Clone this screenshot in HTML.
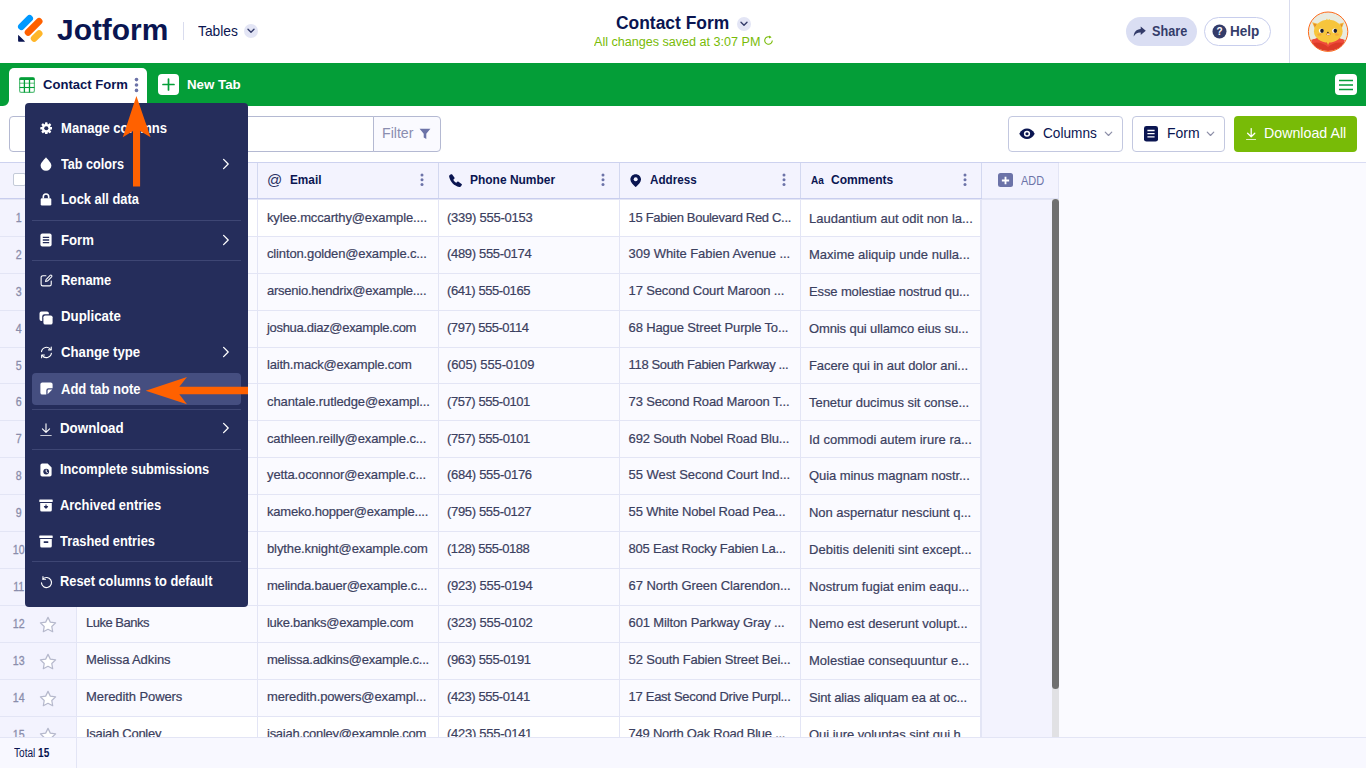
<!DOCTYPE html>
<html lang="en">
<head>
<meta charset="utf-8">
<title>Contact Form - Jotform Tables</title>
<style>
*{box-sizing:border-box;margin:0;padding:0}
html,body{width:1366px;height:768px;overflow:hidden;background:#fff}
body{font-family:"Liberation Sans",sans-serif;color:#0a1551;position:relative}
.abs{position:absolute}
/* header */
#hdr{position:absolute;left:0;top:0;width:1366px;height:63px;background:#fff}
#logo-txt{position:absolute;left:56px;top:12px;font-size:29.5px;font-weight:700;color:#0a1551;line-height:36px}
#sep1{position:absolute;left:183px;top:22px;width:1px;height:18px;background:#d9dcee}
#tables{position:absolute;left:198px;top:22px;font-size:14.5px;line-height:18px;color:#0a1551}
.chev-c{position:absolute;width:14px;height:14px;border-radius:50%;background:#e3e5f5}
#title{position:absolute;left:615px;top:11px;font-size:18px;font-weight:700;line-height:22px;color:#0a1551;white-space:nowrap}
#saved{position:absolute;left:593px;top:34px;font-size:12.5px;line-height:15px;color:#78bb07;white-space:nowrap}
#share{position:absolute;left:1126px;top:17px;width:71px;height:29px;border-radius:15px;background:#dadef3}
#help{position:absolute;left:1204px;top:17px;width:67px;height:29px;border-radius:15px;background:#fff;border:1px solid #c8ceed}
.pill-t{position:absolute;top:6px;font-size:14px;font-weight:700;line-height:17px;color:#343c6a}
#vsep{position:absolute;left:1289px;top:0;width:1px;height:63px;background:#d9dcee}
/* tab bar */
#bar{position:absolute;left:0;top:63px;width:1366px;height:43px;background:#049e38}
#tab{position:absolute;left:9px;top:5px;width:138px;height:38px;background:#fff;border-radius:5px 5px 0 0}
#tab-t{position:absolute;left:33px;top:8px;font-size:13.5px;font-weight:700;line-height:16px;color:#0a1551;white-space:nowrap}
#newtab-t{position:absolute;left:186px;top:13px;font-size:13.5px;font-weight:700;line-height:16px;color:#fff;white-space:nowrap}
/* toolbar */
#search{position:absolute;left:9px;top:116px;width:365px;height:36px;border:1px solid #b4b9d2;border-radius:4px 0 0 4px;background:#fff}
#filter{position:absolute;left:373px;top:116px;width:68px;height:36px;border:1px solid #b4b9d2;border-radius:0 4px 4px 0;background:#fafaff}
#filter span{position:absolute;left:9px;top:8px;font-size:14.5px;line-height:17px;color:#8a8db0}
.tbtn{position:absolute;top:116px;height:36px;border:1px solid #c3c8e0;border-radius:4px;background:#fff}
.tbtn span{position:absolute;top:8px;font-size:14.5px;line-height:17px;color:#0a1551;white-space:nowrap}
#dl{position:absolute;left:1234px;top:116px;width:123px;height:36px;border-radius:4px;background:#78bb07}
#dl span{position:absolute;left:31px;top:8px;font-size:14.5px;line-height:17px;color:#fff;white-space:nowrap}
/* table */
#tbl{position:absolute;left:0;top:160px;width:1366px;height:578px;background:linear-gradient(#fff 0,#fff 2px,#d9dcf3 2px,#d9dcf3 3px,#fafaff 3px);overflow:hidden}
#tbl:before{content:"";position:absolute;left:0;top:3px;width:1059px;height:575px;background:#f3f3fe}
#th{position:absolute;left:0;top:2px;width:1059px;height:37px;background:#f3f3fe;border-top:1px solid #cdd2ef;border-bottom:1px solid #dfe2f5;box-shadow:0 1px 0 #e3e5f5}
.hc{position:absolute;top:0;height:35px;border-right:1px solid #d3d8f0;box-shadow:0 1px 0 #c8cdee}
.hc.add{border-right:1px solid #e3e5f5;box-shadow:none}
.cb{position:absolute;left:13px;top:10px;width:13px;height:13px;border:1px solid #c3cad8;border-radius:2px;background:#fff}
.hi{position:absolute}
.at{font-size:15px;line-height:18px;color:#2a3163}
.aa{font-size:10px;line-height:12px;color:#0a1551;font-weight:700}
.ht{position:absolute;left:31px;top:9px;font-size:13px;font-weight:700;line-height:16px;color:#0a1551;white-space:nowrap}
.kb{position:absolute;left:161.9px;top:9.6px}
.plus{position:absolute;left:16.3px;top:9.8px;width:15px;height:14.6px;border-radius:2.5px;background:#6c73a8}
.plus svg{position:absolute;left:0;top:0}
.addt{position:absolute;left:38px;top:11px;font-size:12px;line-height:14px;color:#6c73a8}
.row{position:absolute;left:0;width:982px;background:#fafaff}
.row.w{background:#fff}
.c{position:absolute;top:0;height:100%;width:181px;border-right:1px solid #e3e5f5;border-bottom:1px solid #e3e5f5;overflow:hidden;white-space:nowrap}
.c span{position:absolute;left:9px;top:calc(10px + var(--o));font-size:13px;line-height:16px;color:#3b4060;white-space:nowrap;-webkit-text-stroke:.2px #3b4060}
.c3 span{left:8px}
.c4 span{left:8.6px}
.c5{width:181px;border-right:2px solid #e3e5f5}
.c5 span{left:8px;top:calc(11px + var(--o))}
.c0{left:0;width:77px;background:#f3f3fe}
.c0 .n{left:0;width:44px;top:10px;text-align:center;color:#8a8dab;font-size:12.5px;transform:scaleX(.85);transform-origin:0 0;-webkit-text-stroke:.3px #8a8dab}
.star{position:absolute;left:38.8px;top:9.8px}
#sbtrack{position:absolute;left:1052px;top:39px;width:7px;height:539px;background:#e1e1e4}
#sbthumb{position:absolute;left:1052px;top:39px;width:7px;height:490px;background:#707070;border-radius:3.5px}
#foot{position:absolute;left:0;top:737px;width:1366px;height:31px;background:#f8f8ff;border-top:1px solid #e3e5f5}
#ftot{position:absolute;left:13px;top:8px;font-size:12px;line-height:13px;color:#0a1551}
#fsep{position:absolute;left:76px;top:0;width:1px;height:30px;background:#e3e5f5}
/* menu */
#menu{position:absolute;left:25px;top:103px;width:223px;height:504px;background:#252d5b;border-radius:4px}
.mi{position:absolute}
.mt{position:absolute;left:36px;font-size:14px;font-weight:700;line-height:18px;color:#fff;white-space:nowrap}
.md{position:absolute;left:7px;width:209px;height:1px;background:#3e4674}
.mhl{position:absolute;left:7px;width:209px;height:32px;border-radius:4px;background:#454e80}
#arrows{position:absolute;left:0;top:0;pointer-events:none}
/*FIT*/
#logo-txt{margin-left:1.44px;margin-top:0px;transform:scaleX(1.0135);transform-origin:0 0}
#tables{margin-left:0.00px;margin-top:0px;transform:scaleX(0.9524);transform-origin:0 0}
#title{margin-left:1.44px;margin-top:1px;transform:scaleX(0.9673);transform-origin:0 0}
#saved{margin-left:0.54px;margin-top:1px;transform:scaleX(1.0061);transform-origin:0 0}
#sh-t{margin-left:0.54px;margin-top:0px;transform:scaleX(0.9039);transform-origin:0 0}
#hp-t{margin-left:-0.54px;margin-top:0px;transform:scaleX(0.9655);transform-origin:0 0}
#tab-t{margin-left:0.54px;margin-top:1px;transform:scaleX(0.9680);transform-origin:0 0}
#newtab-t{margin-left:0.72px;margin-top:1px;transform:scaleX(0.9859);transform-origin:0 0}
#flt-t{margin-left:-0.72px;margin-top:0px;transform:scaleX(0.9755);transform-origin:0 0}
#col-t{margin-left:0.36px;margin-top:0px;transform:scaleX(0.9409);transform-origin:0 0}
#frm-t{margin-left:-0.90px;margin-top:0px;transform:scaleX(0.9637);transform-origin:0 0}
#dl-t{margin-left:-1.08px;margin-top:1px;transform:scaleX(0.9806);transform-origin:0 0}
#h-email{margin-left:0.54px;margin-top:0px;transform:scaleX(0.9070);transform-origin:0 0}
#h-phone{margin-left:0.18px;margin-top:0px;transform:scaleX(0.9207);transform-origin:0 0}
#h-addr{margin-left:-0.54px;margin-top:0px;transform:scaleX(0.8966);transform-origin:0 0}
#h-comm{margin-left:-0.54px;margin-top:0px;transform:scaleX(0.9258);transform-origin:0 0}
#add-t{margin-left:0.72px;margin-top:0px;transform:scaleX(0.9141);transform-origin:0 0}
#ftot{margin-left:0.54px;margin-top:1px;transform:scaleX(0.8405);transform-origin:0 0}
#m0{margin-left:-0.18px;margin-top:0px;transform:scaleX(0.9337);transform-origin:0 0}
#m1{margin-left:-0.14px;margin-top:0px;transform:scaleX(0.9023);transform-origin:0 0}
#m2{margin-left:-0.18px;margin-top:0px;transform:scaleX(0.9184);transform-origin:0 0}
#m3{margin-left:-0.18px;margin-top:0px;transform:scaleX(0.9378);transform-origin:0 0}
#m4{margin-left:-0.18px;margin-top:0px;transform:scaleX(0.9224);transform-origin:0 0}
#m5{margin-left:-0.18px;margin-top:0px;transform:scaleX(0.9490);transform-origin:0 0}
#m6{margin-left:-0.18px;margin-top:0px;transform:scaleX(0.9422);transform-origin:0 0}
#m7{margin-left:-0.18px;margin-top:0px;transform:scaleX(0.9302);transform-origin:0 0}
#m8{margin-left:-0.72px;margin-top:0px;transform:scaleX(0.9519);transform-origin:0 0}
#m9{margin-left:-0.72px;margin-top:0px;transform:scaleX(0.9134);transform-origin:0 0}
#m10{margin-left:-0.72px;margin-top:0px;transform:scaleX(0.9225);transform-origin:0 0}
#m11{margin-left:-0.72px;margin-top:0px;transform:scaleX(0.9172);transform-origin:0 0}
#m12{margin-left:-0.72px;margin-top:0px;transform:scaleX(0.9157);transform-origin:0 0}
/*ENDFIT*/
</style>
</head>
<body>
<!-- HEADER -->
<div id="hdr">
  <svg class="abs" style="left:17px;top:14px" width="28" height="30" viewBox="0 0 28 30">
    <path d="M1.1 21.6 Q1.1 20.6 1.9 21.4 L7.6 27 Q8.4 27.8 7.4 27.8 L1.9 27.8 Q1.1 27.8 1.1 27 Z" fill="#0a1551"/>
    <g fill="none" stroke-linecap="round" stroke-width="6.8">
    <path d="M4.4 12.7 L12.6 4.4" stroke="#0099ff"/>
    <path d="M11.1 18.4 L22.1 7.3" stroke="#ff6100"/>
    <path d="M17.2 24.4 L22.1 19.6" stroke="#ffb629"/>
    </g>
  </svg>
  <div id="logo-txt">Jotform</div>
  <div id="sep1"></div>
  <div id="tables">Tables</div>
  <div class="chev-c" style="left:244px;top:24px"><svg class="abs" style="left:3px;top:4px" width="8" height="6" viewBox="0 0 8 6"><path d="M1 1.2 L4 4.2 L7 1.2" fill="none" stroke="#343c6a" stroke-width="1.4" stroke-linecap="round" stroke-linejoin="round"/></svg></div>
  <div id="title">Contact Form</div>
  <div class="chev-c" style="left:736.7px;top:16.7px"><svg class="abs" style="left:3px;top:4px" width="8" height="6" viewBox="0 0 8 6"><path d="M1 1.2 L4 4.2 L7 1.2" fill="none" stroke="#343c6a" stroke-width="1.4" stroke-linecap="round" stroke-linejoin="round"/></svg></div>
  <div id="saved">All changes saved at 3:07 PM</div>
  <svg class="abs" style="left:763px;top:35px" width="11" height="11" viewBox="0 0 11 11"><path d="M9.3 5.5 A3.8 3.8 0 1 1 7.2 2.1" fill="none" stroke="#78bb07" stroke-width="1.1"/><path d="M6.2 0.6 L8.6 2.3 L6.0 3.6 Z" fill="#78bb07"/></svg>
  <div id="share">
    <svg class="abs" style="left:7.4px;top:8.6px" width="13.5" height="11.4" viewBox="0 0 15 13"><path d="M8.6 0.6 L14.4 5.4 L8.6 10.2 L8.6 7.3 C5 7.1 2.4 8.6 0.6 12 C0.8 7 3.6 3.9 8.6 3.5 Z" fill="#343c6a"/></svg>
    <div class="pill-t" id="sh-t" style="left:25px">Share</div>
  </div>
  <div id="help">
    <svg class="abs" style="left:7px;top:6px" width="15" height="15" viewBox="0 0 15 15"><circle cx="7.5" cy="7.5" r="7" fill="#343c6a"/><text x="7.5" y="11" font-family="Liberation Sans, sans-serif" font-size="10" font-weight="700" fill="#fff" text-anchor="middle">?</text></svg>
    <div class="pill-t" id="hp-t" style="left:26px;top:5px">Help</div>
  </div>
  <div id="vsep"></div>
  <!-- avatar -->
  <svg class="abs" style="left:1307px;top:10px" width="43" height="44" viewBox="0 0 43 44">
    <defs><clipPath id="avc"><circle cx="21.1" cy="21.7" r="19.4"/></clipPath></defs>
    <circle cx="21.1" cy="21.7" r="19.7" fill="#e9ebdf" stroke="#ff6a1a" stroke-width="1"/>
    <g clip-path="url(#avc)">
      <path d="M5.1 12.3 L10.6 13.8 L8 19 Z" fill="#f4b63a"/><path d="M6.6 13.8 L9.6 14.6 L8 17.4 Z" fill="#e08a2a"/>
      <path d="M37 12.6 L32.4 13.8 L34.6 19 Z" fill="#f4b63a"/><path d="M35.6 14 L33.2 14.7 L34.6 17.4 Z" fill="#e08a2a"/>
      <ellipse cx="21" cy="36.5" rx="18.5" ry="10.5" fill="#dc3a28"/>
      <path d="M4 30 Q12 26 21 34 Q30 26 38 30 L36 33 Q28 31 21 37 Q14 31 6 33 Z" fill="#ee4a3c"/>
      <path d="M18 11.8 L20 8.6 L21 11 L22.4 9 L24 11.8 Z" fill="#f7c53c"/>
      <ellipse cx="21.3" cy="21.2" rx="14.3" ry="11.4" fill="#f7c53c"/>
      <path d="M19.6 31.8 L21 35 L22.6 31.8 Z" fill="#f7c53c"/>
      <ellipse cx="12.4" cy="24.6" rx="2.1" ry="1.2" fill="#f6a93c"/><ellipse cx="29.9" cy="24.6" rx="2.1" ry="1.2" fill="#f6a93c"/>
      <ellipse cx="14.3" cy="20.7" rx="2.5" ry="2.3" fill="#fff"/><ellipse cx="15" cy="20.8" rx="1.8" ry="2.1" fill="#1c1b2a"/>
      <ellipse cx="27.6" cy="20.7" rx="2.5" ry="2.3" fill="#fff"/><ellipse cx="28.3" cy="20.8" rx="1.8" ry="2.1" fill="#1c1b2a"/>
      <ellipse cx="20.9" cy="22.4" rx="0.9" ry="0.55" fill="#3a2a20"/>
      <path d="M19 23.8 Q21.4 26.8 23.8 23.8 Z" fill="#a8322a"/><rect x="20" y="23.9" width="2.8" height="0.9" fill="#fff"/>
    </g>
  </svg>
</div>

<!-- TAB BAR -->
<div id="bar">
  <div id="tab">
    <svg class="abs" style="left:10px;top:9px" width="16" height="16" viewBox="0 0 16 16"><rect x="0.6" y="0.6" width="14.8" height="14.8" rx="1.6" fill="#fff" stroke="#049e38" stroke-opacity=".65" stroke-width="1.2"/><path d="M0.4 2 A1.6 1.6 0 0 1 2 0.4 H14 A1.6 1.6 0 0 1 15.6 2 V2.9 H0.4 Z" fill="#049e38"/><path d="M5.4 2 V15.4 M10.5 2 V15.4" stroke="#049e38" stroke-width="1.3" fill="none"/><path d="M0.6 6.2 H15.4" stroke="#049e38" stroke-opacity=".6" stroke-width="1.1"/><path d="M0.6 10.5 H15.4" stroke="#049e38" stroke-width="1.1"/></svg>
    <div id="tab-t">Contact Form</div>
    <svg class="abs" style="left:125px;top:9px" width="5" height="16" viewBox="0 0 5 16"><circle cx="2.5" cy="2.6" r="1.8" fill="#6c73a8"/><circle cx="2.5" cy="8" r="1.8" fill="#6c73a8"/><circle cx="2.5" cy="13.4" r="1.8" fill="#6c73a8"/></svg>
  </div>
  <!-- inverse corner left of tab -->
  <svg class="abs" style="left:0;top:37px" width="9" height="6" viewBox="0 0 9 6"><path d="M0 6 H9 V0 A6 6 0 0 1 3 6 Z" fill="#fff"/></svg>
    <div class="abs" style="left:158px;top:11px;width:21px;height:21px;border-radius:4px;background:#fff"><svg class="abs" style="left:4px;top:4px" width="13" height="13" viewBox="0 0 13 13"><path d="M6.5 1 V12 M1 6.5 H12" stroke="#049e38" stroke-width="1.7" stroke-linecap="round"/></svg></div>
  <div id="newtab-t">New Tab</div>
  <div class="abs" style="left:1335px;top:11px;width:22px;height:21px;border-radius:4px;background:#fff"><svg class="abs" style="left:4px;top:5px" width="14" height="12" viewBox="0 0 14 12"><path d="M0.5 1.5 H13.5 M0.5 6 H13.5 M0.5 10.5 H13.5" stroke="#049e38" stroke-width="1.6" stroke-linecap="round"/></svg></div>
</div>

<!-- TOOLBAR -->
<div id="search"></div>
<div id="filter"><span id="flt-t">Filter</span><svg class="abs" style="left:45px;top:11px" width="12" height="12" viewBox="0 0 12 12"><path d="M0.6 0.8 H11.4 L7.3 5.8 V11 L4.7 9.4 V5.8 Z" fill="#6c73a8"/></svg></div>
<div class="tbtn" style="left:1008px;width:115px"><svg class="abs" style="left:9.8px;top:11.3px" width="16" height="11.5" viewBox="0 0 17 13" preserveAspectRatio="none"><path d="M0.3 6.5 C2.5 2.3 5.3 0.6 8.5 0.6 C11.7 0.6 14.5 2.3 16.7 6.5 C14.5 10.7 11.7 12.4 8.5 12.4 C5.3 12.4 2.5 10.7 0.3 6.5 Z" fill="#0a1551"/><circle cx="8.5" cy="6.5" r="3.3" fill="#fff"/><circle cx="8.5" cy="6.5" r="1.7" fill="#0a1551"/></svg><span id="col-t" style="left:34px">Columns</span><svg class="abs" style="left:95.2px;top:13.6px" width="9" height="6" viewBox="0 0 10 7"><path d="M1.2 1.4 L5 5.2 L8.8 1.4" fill="none" stroke="#8d8fa8" stroke-width="1.4" stroke-linecap="round" stroke-linejoin="round"/></svg></div>
<div class="tbtn" style="left:1132px;width:93px"><svg class="abs" style="left:11.2px;top:9.4px" width="14" height="15.4" viewBox="0 0 14 17" preserveAspectRatio="none"><rect x="0" y="0" width="14" height="17" rx="2.5" fill="#0a1551"/><path d="M3.4 5 H10.6 M3.4 8.5 H10.6 M3.4 12 H10.6" stroke="#fff" stroke-width="1.5"/></svg><span id="frm-t" style="left:35px">Form</span><svg class="abs" style="left:73px;top:13.6px" width="9" height="6" viewBox="0 0 10 7"><path d="M1.2 1.4 L5 5.2 L8.8 1.4" fill="none" stroke="#8d8fa8" stroke-width="1.4" stroke-linecap="round" stroke-linejoin="round"/></svg></div>
<div id="dl"><svg class="abs" style="left:12px;top:11.6px" width="10.4" height="12.6" viewBox="0 0 10.4 12.6"><path d="M5.2 0.6 V8.6 M1.6 5.2 L5.2 8.8 L8.8 5.2 M0.6 11.8 H9.8" fill="none" stroke="#fff" stroke-width="1.25" stroke-linecap="round" stroke-linejoin="round"/></svg><span id="dl-t">Download All</span></div>

<!--TABLE_START-->
<div id="tbl">
<div id="th">
<div class="hc" style="left:0;width:77px"><div class="cb"></div></div>
<div class="hc" style="left:77px;width:181px"><svg class="hi" style="left:9px;top:11px" width="14" height="14" viewBox="0 0 14 14"><circle cx="7" cy="4" r="3.2" fill="#0a1551"/><path d="M0.8 13.4 C0.8 9.6 3.6 8 7 8 C10.4 8 13.2 9.6 13.2 13.4 Z" fill="#0a1551"/></svg><span class="ht" id="h-name">Name</span><svg class="kb" width="4" height="14" viewBox="0 0 4 14"><circle cx="2" cy="2" r="1.5" fill="#6c73a8"/><circle cx="2" cy="6.7" r="1.5" fill="#6c73a8"/><circle cx="2" cy="11.4" r="1.5" fill="#6c73a8"/></svg></div>
<div class="hc" style="left:258px;width:181px"><span class="hi at" style="left:9px;top:8px">@</span><span class="ht" id="h-email">Email</span><svg class="kb" width="4" height="14" viewBox="0 0 4 14"><circle cx="2" cy="2" r="1.5" fill="#6c73a8"/><circle cx="2" cy="6.7" r="1.5" fill="#6c73a8"/><circle cx="2" cy="11.4" r="1.5" fill="#6c73a8"/></svg></div>
<div class="hc" style="left:439px;width:181px"><svg class="hi" style="left:10px;top:11px" width="13" height="13" viewBox="0 0 13 13"><path d="M3.2 0.5 L5.4 3.6 C5.7 4 5.6 4.5 5.3 4.8 L4.3 5.8 C5 7.2 5.9 8.1 7.3 8.8 L8.3 7.8 C8.6 7.5 9.1 7.4 9.5 7.7 L12.6 9.9 C13 10.2 13 10.7 12.8 11.1 L12 12.3 C11.6 12.9 10.9 13.1 10.2 12.9 C5 11.6 1.5 8.1 0.2 2.9 C0 2.2 0.2 1.5 0.8 1.1 L2 0.3 C2.4 0.1 2.9 0.1 3.2 0.5 Z" fill="#0a1551"/></svg><span class="ht" id="h-phone">Phone Number</span><svg class="kb" width="4" height="14" viewBox="0 0 4 14"><circle cx="2" cy="2" r="1.5" fill="#6c73a8"/><circle cx="2" cy="6.7" r="1.5" fill="#6c73a8"/><circle cx="2" cy="11.4" r="1.5" fill="#6c73a8"/></svg></div>
<div class="hc" style="left:620px;width:181px"><svg class="hi" style="left:10.4px;top:10.8px" width="11.4" height="13.4" viewBox="0 0 12 14"><path d="M6 0.3 C2.9 0.3 0.4 2.7 0.4 5.7 C0.4 8.7 3.5 11.4 6 13.8 C8.5 11.4 11.6 8.7 11.6 5.7 C11.6 2.7 9.1 0.3 6 0.3 Z" fill="#0a1551"/><circle cx="6" cy="5.6" r="2.1" fill="#f3f3fe"/></svg><span class="ht" id="h-addr">Address</span><svg class="kb" width="4" height="14" viewBox="0 0 4 14"><circle cx="2" cy="2" r="1.5" fill="#6c73a8"/><circle cx="2" cy="6.7" r="1.5" fill="#6c73a8"/><circle cx="2" cy="11.4" r="1.5" fill="#6c73a8"/></svg></div>
<div class="hc" style="left:801px;width:181px"><span class="hi aa" style="left:10px;top:12px"><b>A</b>a</span><span class="ht" id="h-comm">Comments</span><svg class="kb" width="4" height="14" viewBox="0 0 4 14"><circle cx="2" cy="2" r="1.5" fill="#6c73a8"/><circle cx="2" cy="6.7" r="1.5" fill="#6c73a8"/><circle cx="2" cy="11.4" r="1.5" fill="#6c73a8"/></svg></div>
<div class="hc add" style="left:982px;width:77px"><div class="plus"><svg width="15" height="15" viewBox="0 0 14 14"><path d="M7 3.6 V10.4 M3.6 7 H10.4" stroke="#fff" stroke-width="1.7"/></svg></div><span class="addt" id="add-t">ADD</span></div>
</div>
<div class="row w" style="top:40px;height:37px;--o:0px">
<div class="c c0"><span class="n">1</span><svg class="star" width="18" height="16.9" viewBox="0 0 17 16"><path d="M8.5 1.3 L10.7 5.8 L15.7 6.5 L12.1 10 L12.95 14.9 L8.5 12.55 L4.05 14.9 L4.9 10 L1.3 6.5 L6.3 5.8 Z" fill="#fff" stroke="#b5b8cc" stroke-width="1.15" stroke-linejoin="round"/></svg></div>
<div class="c c1" style="left:77px"><span style="letter-spacing:-0.220px">Kylee Mccarthy</span></div>
<div class="c c2" style="left:258px"><span style="letter-spacing:-0.136px">kylee.mccarthy@example....</span></div>
<div class="c c3" style="left:439px"><span style="letter-spacing:-0.251px">(339) 555-0153</span></div>
<div class="c c4" style="left:620px"><span style="letter-spacing:-0.316px">15 Fabien Boulevard Red C...</span></div>
<div class="c c5" style="left:801px"><span style="letter-spacing:-0.009px">Laudantium aut odit non la...</span></div>
</div>
<div class="row" style="top:77px;height:37px;--o:-1px">
<div class="c c0"><span class="n">2</span><svg class="star" width="18" height="16.9" viewBox="0 0 17 16"><path d="M8.5 1.3 L10.7 5.8 L15.7 6.5 L12.1 10 L12.95 14.9 L8.5 12.55 L4.05 14.9 L4.9 10 L1.3 6.5 L6.3 5.8 Z" fill="#fff" stroke="#b5b8cc" stroke-width="1.15" stroke-linejoin="round"/></svg></div>
<div class="c c1" style="left:77px"><span style="letter-spacing:-0.220px">Clinton Golden</span></div>
<div class="c c2" style="left:258px"><span style="letter-spacing:-0.139px">clinton.golden@example.c...</span></div>
<div class="c c3" style="left:439px"><span style="letter-spacing:-0.328px">(489) 555-0174</span></div>
<div class="c c4" style="left:620px"><span style="letter-spacing:-0.058px">309 White Fabien Avenue ...</span></div>
<div class="c c5" style="left:801px"><span style="letter-spacing:-0.009px">Maxime aliquip unde nulla...</span></div>
</div>
<div class="row" style="top:114px;height:37px;--o:-1px">
<div class="c c0"><span class="n">3</span><svg class="star" width="18" height="16.9" viewBox="0 0 17 16"><path d="M8.5 1.3 L10.7 5.8 L15.7 6.5 L12.1 10 L12.95 14.9 L8.5 12.55 L4.05 14.9 L4.9 10 L1.3 6.5 L6.3 5.8 Z" fill="#fff" stroke="#b5b8cc" stroke-width="1.15" stroke-linejoin="round"/></svg></div>
<div class="c c1" style="left:77px"><span style="letter-spacing:-0.220px">Arsenio Hendrix</span></div>
<div class="c c2" style="left:258px"><span style="letter-spacing:-0.235px">arsenio.hendrix@example....</span></div>
<div class="c c3" style="left:439px"><span style="letter-spacing:-0.420px">(641) 555-0165</span></div>
<div class="c c4" style="left:620px"><span style="letter-spacing:-0.156px">17 Second Court Maroon ...</span></div>
<div class="c c5" style="left:801px"><span style="letter-spacing:-0.127px">Esse molestiae nostrud qu...</span></div>
</div>
<div class="row" style="top:151px;height:37px;--o:-1px">
<div class="c c0"><span class="n">4</span><svg class="star" width="18" height="16.9" viewBox="0 0 17 16"><path d="M8.5 1.3 L10.7 5.8 L15.7 6.5 L12.1 10 L12.95 14.9 L8.5 12.55 L4.05 14.9 L4.9 10 L1.3 6.5 L6.3 5.8 Z" fill="#fff" stroke="#b5b8cc" stroke-width="1.15" stroke-linejoin="round"/></svg></div>
<div class="c c1" style="left:77px"><span style="letter-spacing:-0.220px">Joshua Diaz</span></div>
<div class="c c2" style="left:258px"><span style="letter-spacing:-0.311px">joshua.diaz@example.com</span></div>
<div class="c c3" style="left:439px"><span style="letter-spacing:-0.466px">(797) 555-0114</span></div>
<div class="c c4" style="left:620px"><span style="letter-spacing:-0.146px">68 Hague Street Purple To...</span></div>
<div class="c c5" style="left:801px"><span style="letter-spacing:-0.109px">Omnis qui ullamco eius su...</span></div>
</div>
<div class="row" style="top:188px;height:36px;--o:-1px">
<div class="c c0"><span class="n">5</span><svg class="star" width="18" height="16.9" viewBox="0 0 17 16"><path d="M8.5 1.3 L10.7 5.8 L15.7 6.5 L12.1 10 L12.95 14.9 L8.5 12.55 L4.05 14.9 L4.9 10 L1.3 6.5 L6.3 5.8 Z" fill="#fff" stroke="#b5b8cc" stroke-width="1.15" stroke-linejoin="round"/></svg></div>
<div class="c c1" style="left:77px"><span style="letter-spacing:-0.220px">Laith Mack</span></div>
<div class="c c2" style="left:258px"><span style="letter-spacing:-0.201px">laith.mack@example.com</span></div>
<div class="c c3" style="left:439px"><span style="letter-spacing:-0.112px">(605) 555-0109</span></div>
<div class="c c4" style="left:620px"><span style="letter-spacing:-0.350px">118 South Fabien Parkway ...</span></div>
<div class="c c5" style="left:801px"><span style="letter-spacing:-0.072px">Facere qui in aut dolor ani...</span></div>
</div>
<div class="row" style="top:224px;height:37px;--o:0px">
<div class="c c0"><span class="n">6</span><svg class="star" width="18" height="16.9" viewBox="0 0 17 16"><path d="M8.5 1.3 L10.7 5.8 L15.7 6.5 L12.1 10 L12.95 14.9 L8.5 12.55 L4.05 14.9 L4.9 10 L1.3 6.5 L6.3 5.8 Z" fill="#fff" stroke="#b5b8cc" stroke-width="1.15" stroke-linejoin="round"/></svg></div>
<div class="c c1" style="left:77px"><span style="letter-spacing:-0.220px">Chantale Rutledge</span></div>
<div class="c c2" style="left:258px"><span style="letter-spacing:-0.108px">chantale.rutledge@exampl...</span></div>
<div class="c c3" style="left:439px"><span style="letter-spacing:-0.428px">(757) 555-0101</span></div>
<div class="c c4" style="left:620px"><span style="letter-spacing:-0.172px">73 Second Road Maroon T...</span></div>
<div class="c c5" style="left:801px"><span style="letter-spacing:-0.035px">Tenetur ducimus sit conse...</span></div>
</div>
<div class="row" style="top:261px;height:37px;--o:0px">
<div class="c c0"><span class="n">7</span><svg class="star" width="18" height="16.9" viewBox="0 0 17 16"><path d="M8.5 1.3 L10.7 5.8 L15.7 6.5 L12.1 10 L12.95 14.9 L8.5 12.55 L4.05 14.9 L4.9 10 L1.3 6.5 L6.3 5.8 Z" fill="#fff" stroke="#b5b8cc" stroke-width="1.15" stroke-linejoin="round"/></svg></div>
<div class="c c1" style="left:77px"><span style="letter-spacing:-0.220px">Cathleen Reilly</span></div>
<div class="c c2" style="left:258px"><span style="letter-spacing:-0.127px">cathleen.reilly@example.c...</span></div>
<div class="c c3" style="left:439px"><span style="letter-spacing:-0.428px">(757) 555-0101</span></div>
<div class="c c4" style="left:620px"><span style="letter-spacing:-0.158px">692 South Nobel Road Blu...</span></div>
<div class="c c5" style="left:801px"><span style="letter-spacing:0.010px">Id commodi autem irure ra...</span></div>
</div>
<div class="row" style="top:298px;height:37px;--o:-1px">
<div class="c c0"><span class="n">8</span><svg class="star" width="18" height="16.9" viewBox="0 0 17 16"><path d="M8.5 1.3 L10.7 5.8 L15.7 6.5 L12.1 10 L12.95 14.9 L8.5 12.55 L4.05 14.9 L4.9 10 L1.3 6.5 L6.3 5.8 Z" fill="#fff" stroke="#b5b8cc" stroke-width="1.15" stroke-linejoin="round"/></svg></div>
<div class="c c1" style="left:77px"><span style="letter-spacing:-0.220px">Yetta Oconnor</span></div>
<div class="c c2" style="left:258px"><span style="letter-spacing:-0.120px">yetta.oconnor@example.c...</span></div>
<div class="c c3" style="left:439px"><span style="letter-spacing:-0.297px">(684) 555-0176</span></div>
<div class="c c4" style="left:620px"><span style="letter-spacing:-0.058px">55 West Second Court Ind...</span></div>
<div class="c c5" style="left:801px"><span style="letter-spacing:-0.072px">Quia minus magnam nostr...</span></div>
</div>
<div class="row" style="top:335px;height:37px;--o:-1px">
<div class="c c0"><span class="n">9</span><svg class="star" width="18" height="16.9" viewBox="0 0 17 16"><path d="M8.5 1.3 L10.7 5.8 L15.7 6.5 L12.1 10 L12.95 14.9 L8.5 12.55 L4.05 14.9 L4.9 10 L1.3 6.5 L6.3 5.8 Z" fill="#fff" stroke="#b5b8cc" stroke-width="1.15" stroke-linejoin="round"/></svg></div>
<div class="c c1" style="left:77px"><span style="letter-spacing:-0.220px">Kameko Hopper</span></div>
<div class="c c2" style="left:258px"><span style="letter-spacing:-0.212px">kameko.hopper@example....</span></div>
<div class="c c3" style="left:439px"><span style="letter-spacing:-0.335px">(795) 555-0127</span></div>
<div class="c c4" style="left:620px"><span style="letter-spacing:-0.168px">55 White Nobel Road Pea...</span></div>
<div class="c c5" style="left:801px"><span style="letter-spacing:-0.042px">Non aspernatur nesciunt q...</span></div>
</div>
<div class="row" style="top:372px;height:37px;--o:-1px">
<div class="c c0"><span class="n">10</span><svg class="star" width="18" height="16.9" viewBox="0 0 17 16"><path d="M8.5 1.3 L10.7 5.8 L15.7 6.5 L12.1 10 L12.95 14.9 L8.5 12.55 L4.05 14.9 L4.9 10 L1.3 6.5 L6.3 5.8 Z" fill="#fff" stroke="#b5b8cc" stroke-width="1.15" stroke-linejoin="round"/></svg></div>
<div class="c c1" style="left:77px"><span style="letter-spacing:-0.220px">Blythe Knight</span></div>
<div class="c c2" style="left:258px"><span style="letter-spacing:-0.107px">blythe.knight@example.com</span></div>
<div class="c c3" style="left:439px"><span style="letter-spacing:-0.466px">(128) 555-0188</span></div>
<div class="c c4" style="left:620px"><span style="letter-spacing:-0.228px">805 East Rocky Fabien La...</span></div>
<div class="c c5" style="left:801px"><span style="letter-spacing:0.053px">Debitis deleniti sint except...</span></div>
</div>
<div class="row" style="top:409px;height:37px;--o:-1px">
<div class="c c0"><span class="n">11</span><svg class="star" width="18" height="16.9" viewBox="0 0 17 16"><path d="M8.5 1.3 L10.7 5.8 L15.7 6.5 L12.1 10 L12.95 14.9 L8.5 12.55 L4.05 14.9 L4.9 10 L1.3 6.5 L6.3 5.8 Z" fill="#fff" stroke="#b5b8cc" stroke-width="1.15" stroke-linejoin="round"/></svg></div>
<div class="c c1" style="left:77px"><span style="letter-spacing:-0.220px">Melinda Bauer</span></div>
<div class="c c2" style="left:258px"><span style="letter-spacing:-0.212px">melinda.bauer@example.c...</span></div>
<div class="c c3" style="left:439px"><span style="letter-spacing:-0.251px">(923) 555-0194</span></div>
<div class="c c4" style="left:620px"><span style="letter-spacing:-0.074px">67 North Green Clarendon...</span></div>
<div class="c c5" style="left:801px"><span style="letter-spacing:0.015px">Nostrum fugiat enim eaqu...</span></div>
</div>
<div class="row" style="top:446px;height:37px;--o:-1px">
<div class="c c0"><span class="n">12</span><svg class="star" width="18" height="16.9" viewBox="0 0 17 16"><path d="M8.5 1.3 L10.7 5.8 L15.7 6.5 L12.1 10 L12.95 14.9 L8.5 12.55 L4.05 14.9 L4.9 10 L1.3 6.5 L6.3 5.8 Z" fill="#fff" stroke="#b5b8cc" stroke-width="1.15" stroke-linejoin="round"/></svg></div>
<div class="c c1" style="left:77px"><span style="letter-spacing:-0.498px">Luke Banks</span></div>
<div class="c c2" style="left:258px"><span style="letter-spacing:-0.287px">luke.banks@example.com</span></div>
<div class="c c3" style="left:439px"><span style="letter-spacing:-0.243px">(323) 555-0102</span></div>
<div class="c c4" style="left:620px"><span style="letter-spacing:-0.139px">601 Milton Parkway Gray ...</span></div>
<div class="c c5" style="left:801px"><span style="letter-spacing:-0.012px">Nemo est deserunt volupt...</span></div>
</div>
<div class="row" style="top:483px;height:37px;--o:-1px">
<div class="c c0"><span class="n">13</span><svg class="star" width="18" height="16.9" viewBox="0 0 17 16"><path d="M8.5 1.3 L10.7 5.8 L15.7 6.5 L12.1 10 L12.95 14.9 L8.5 12.55 L4.05 14.9 L4.9 10 L1.3 6.5 L6.3 5.8 Z" fill="#fff" stroke="#b5b8cc" stroke-width="1.15" stroke-linejoin="round"/></svg></div>
<div class="c c1" style="left:77px"><span style="letter-spacing:-0.112px">Melissa Adkins</span></div>
<div class="c c2" style="left:258px"><span style="letter-spacing:-0.247px">melissa.adkins@example.c...</span></div>
<div class="c c3" style="left:439px"><span style="letter-spacing:-0.374px">(963) 555-0191</span></div>
<div class="c c4" style="left:620px"><span style="letter-spacing:-0.177px">52 South Fabien Street Bei...</span></div>
<div class="c c5" style="left:801px"><span style="letter-spacing:0.011px">Molestiae consequuntur e...</span></div>
</div>
<div class="row" style="top:520px;height:37px;--o:-1px">
<div class="c c0"><span class="n">14</span><svg class="star" width="18" height="16.9" viewBox="0 0 17 16"><path d="M8.5 1.3 L10.7 5.8 L15.7 6.5 L12.1 10 L12.95 14.9 L8.5 12.55 L4.05 14.9 L4.9 10 L1.3 6.5 L6.3 5.8 Z" fill="#fff" stroke="#b5b8cc" stroke-width="1.15" stroke-linejoin="round"/></svg></div>
<div class="c c1" style="left:77px"><span style="letter-spacing:-0.084px">Meredith Powers</span></div>
<div class="c c2" style="left:258px"><span style="letter-spacing:-0.116px">meredith.powers@exampl...</span></div>
<div class="c c3" style="left:439px"><span style="letter-spacing:-0.428px">(423) 555-0141</span></div>
<div class="c c4" style="left:620px"><span style="letter-spacing:-0.299px">17 East Second Drive Purpl...</span></div>
<div class="c c5" style="left:801px"><span style="letter-spacing:-0.154px">Sint alias aliquam ea at oc...</span></div>
</div>
<div class="row w" style="top:557px;height:37px;--o:-1px">
<div class="c c0"><span class="n">15</span><svg class="star" width="18" height="16.9" viewBox="0 0 17 16"><path d="M8.5 1.3 L10.7 5.8 L15.7 6.5 L12.1 10 L12.95 14.9 L8.5 12.55 L4.05 14.9 L4.9 10 L1.3 6.5 L6.3 5.8 Z" fill="#fff" stroke="#b5b8cc" stroke-width="1.15" stroke-linejoin="round"/></svg></div>
<div class="c c1" style="left:77px"><span style="letter-spacing:-0.278px">Isaiah Conley</span></div>
<div class="c c2" style="left:258px"><span style="letter-spacing:-0.262px">isaiah.conley@example.com</span></div>
<div class="c c3" style="left:439px"><span style="letter-spacing:-0.274px">(423) 555-0141</span></div>
<div class="c c4" style="left:620px"><span style="letter-spacing:-0.247px">749 North Oak Road Blue ...</span></div>
<div class="c c5" style="left:801px"><span style="letter-spacing:-0.053px">Qui iure voluptas sint qui h...</span></div>
</div>
<div id="sbtrack"></div><div id="sbthumb"></div>
</div>
<div id="foot"><div id="ftot">Total <b>15</b></div><div id="fsep"></div></div>
<!--TABLE_END-->
<!--MENU_START-->
<div id="menu">
<svg class="mi" style="left:14.7px;top:18.6px" width="12.6" height="12.6" viewBox="0 0 14 14"><g fill="#fff"><circle cx="7" cy="7" r="4.9"/><g id="t"><rect x="5.6" y="0.3" width="2.8" height="13.4" rx="0.7"/></g><rect x="5.6" y="0.3" width="2.8" height="13.4" rx="0.7" transform="rotate(45 7 7)"/><rect x="5.6" y="0.3" width="2.8" height="13.4" rx="0.7" transform="rotate(90 7 7)"/><rect x="5.6" y="0.3" width="2.8" height="13.4" rx="0.7" transform="rotate(135 7 7)"/></g><circle cx="7" cy="7" r="2.3" fill="#252d5b"/></svg>
<div class="mt" id="m0" style="top:16px">Manage columns</div>
<svg class="mi" style="left:15px;top:54.0px" width="12" height="14" viewBox="0 0 12 14"><path d="M6 0.3 C7.6 2.6 11.4 5.6 11.4 8.6 A5.4 5.2 0 0 1 0.6 8.6 C0.6 5.6 4.4 2.6 6 0.3 Z" fill="#fff"/></svg>
<div class="mt" id="m1" style="top:52px">Tab colors</div>
<svg class="mi" style="left:197px;top:55px" width="8" height="12" viewBox="0 0 8 12"><path d="M1.6 1.4 L6.2 6 L1.6 10.6" fill="none" stroke="#fff" stroke-width="1.3" stroke-linecap="round" stroke-linejoin="round"/></svg>
<svg class="mi" style="left:15px;top:90.2px" width="12" height="13" viewBox="0 0 12 13"><path d="M3.3 5.6 V3.7 A2.7 2.7 0 0 1 8.7 3.7 V5.6" fill="none" stroke="#fff" stroke-width="1.6"/><rect x="0.7" y="5.2" width="10.6" height="7.3" rx="1.3" fill="#fff"/></svg>
<div class="mt" id="m2" style="top:87px">Lock all data</div>
<div class="md" style="top:117px"></div>
<svg class="mi" style="left:15px;top:130.0px" width="12" height="14" viewBox="0 0 12 14"><rect x="0.4" y="0.4" width="11.2" height="13.2" rx="2" fill="#fff"/><path d="M2.8 4.3 H9.2 M2.8 7 H9.2 M2.8 9.7 H9.2" stroke="#252d5b" stroke-width="1.3"/></svg>
<div class="mt" id="m3" style="top:128px">Form</div>
<svg class="mi" style="left:197px;top:131px" width="8" height="12" viewBox="0 0 8 12"><path d="M1.6 1.4 L6.2 6 L1.6 10.6" fill="none" stroke="#fff" stroke-width="1.3" stroke-linecap="round" stroke-linejoin="round"/></svg>
<div class="md" style="top:157px"></div>
<svg class="mi" style="left:14.5px;top:171.2px" width="13.0" height="13.0" viewBox="0 0 14 14"><path d="M6.4 1.9 H3 A1.8 1.8 0 0 0 1.2 3.7 V11 A1.8 1.8 0 0 0 3 12.8 H10.3 A1.8 1.8 0 0 0 12.1 11 V7.6" fill="none" stroke="#fff" stroke-width="1.2" stroke-linecap="round"/><path d="M6 8.2 L6.5 6 L10.9 1.5 A1 1 0 0 1 12.5 3.1 L8.1 7.6 Z" fill="none" stroke="#fff" stroke-width="1.1" stroke-linejoin="round"/></svg>
<div class="mt" id="m4" style="top:168px">Rename</div>
<svg class="mi" style="left:14px;top:207.5px" width="14" height="14" viewBox="0 0 14 14"><path d="M2.4 0.5 H8 A1.9 1.9 0 0 1 9.9 2.4 V3.2 H5.6 A2.4 2.4 0 0 0 3.2 5.6 V9.9 H2.4 A1.9 1.9 0 0 1 0.5 8 V2.4 A1.9 1.9 0 0 1 2.4 0.5 Z" fill="#fff"/><rect x="4.4" y="4.4" width="9.2" height="9.2" rx="1.9" fill="#fff"/></svg>
<div class="mt" id="m5" style="top:204px">Duplicate</div>
<svg class="mi" style="left:14.6px;top:243.4px" width="12.9" height="12.9" viewBox="0 0 14 14"><path d="M1.6 6.2 A5.5 5.5 0 0 1 11.6 3.8 M12.4 7.8 A5.5 5.5 0 0 1 2.4 10.2" fill="none" stroke="#fff" stroke-width="1.2" stroke-linecap="round"/><path d="M12.2 1.2 V4.2 H9.2 M1.8 12.8 V9.8 H4.8" fill="none" stroke="#fff" stroke-width="1.2" stroke-linecap="round" stroke-linejoin="round"/></svg>
<div class="mt" id="m6" style="top:240px">Change type</div>
<svg class="mi" style="left:197px;top:243px" width="8" height="12" viewBox="0 0 8 12"><path d="M1.6 1.4 L6.2 6 L1.6 10.6" fill="none" stroke="#fff" stroke-width="1.3" stroke-linecap="round" stroke-linejoin="round"/></svg>
<div class="mhl" style="top:270px"></div>
<svg class="mi" style="left:15px;top:279.0px" width="13" height="13" viewBox="0 0 13 13"><path d="M2.3 0.4 H10.7 A1.9 1.9 0 0 1 12.6 2.3 V6.3 H8.4 A2.1 2.1 0 0 0 6.3 8.4 V12.6 H2.3 A1.9 1.9 0 0 1 0.4 10.7 V2.3 A1.9 1.9 0 0 1 2.3 0.4 Z" fill="#fff"/><path d="M7.6 12.3 V8.8 A1.2 1.2 0 0 1 8.8 7.6 H12.3 Z" fill="#fff"/></svg>
<div class="mt" id="m7" style="top:277px">Add tab note</div>
<div class="md" style="top:306px"></div>
<svg class="mi" style="left:14.5px;top:319.6px" width="12.0" height="13.8" viewBox="0 0 13 15"><path d="M6.5 0.8 V10 M2.6 6.3 L6.5 10.2 L10.4 6.3 M0.8 13.9 H12.2" fill="none" stroke="#fff" stroke-width="1.2" stroke-linecap="round" stroke-linejoin="round"/></svg>
<div class="mt" id="m8" style="top:316px">Download</div>
<svg class="mi" style="left:197px;top:319px" width="8" height="12" viewBox="0 0 8 12"><path d="M1.6 1.4 L6.2 6 L1.6 10.6" fill="none" stroke="#fff" stroke-width="1.3" stroke-linecap="round" stroke-linejoin="round"/></svg>
<div class="md" style="top:346px"></div>
<svg class="mi" style="left:15px;top:360.0px" width="12" height="14" viewBox="0 0 12 14"><path d="M2.2 0.4 H7.6 L11.6 4.4 V11.8 A1.8 1.8 0 0 1 9.8 13.6 H2.2 A1.8 1.8 0 0 1 0.4 11.8 V2.2 A1.8 1.8 0 0 1 2.2 0.4 Z" fill="#fff"/><circle cx="6.2" cy="8.6" r="2.9" fill="#252d5b"/><path d="M6.2 7 V8.8 L7.4 9.5" fill="none" stroke="#fff" stroke-width="1" stroke-linecap="round"/></svg>
<div class="mt" id="m9" style="top:357px">Incomplete submissions</div>
<svg class="mi" style="left:14px;top:396.0px" width="14" height="13" viewBox="0 0 14 13"><rect x="0.3" y="0.4" width="13.4" height="2.6" rx="0.6" fill="#fff"/><path d="M1.2 4 H12.8 V11 A1.6 1.6 0 0 1 11.2 12.6 H2.8 A1.6 1.6 0 0 1 1.2 11 Z" fill="#fff"/><path d="M7 5.6 V8.4 M5.4 7.6 L7 9.2 L8.6 7.6 Z" fill="#252d5b" stroke="#252d5b" stroke-width="1.1" stroke-linejoin="round"/></svg>
<div class="mt" id="m10" style="top:393px">Archived entries</div>
<svg class="mi" style="left:14px;top:432.2px" width="14" height="13" viewBox="0 0 14 13"><rect x="0.3" y="0.4" width="13.4" height="2.6" rx="0.6" fill="#fff"/><path d="M1.2 4 H12.8 V11 A1.6 1.6 0 0 1 11.2 12.6 H2.8 A1.6 1.6 0 0 1 1.2 11 Z" fill="#fff"/><rect x="4.6" y="6.3" width="4.8" height="1.6" rx="0.6" fill="#252d5b"/></svg>
<div class="mt" id="m11" style="top:429px">Trashed entries</div>
<div class="md" style="top:458px"></div>
<svg class="mi" style="left:14.5px;top:472.8px" width="13.0" height="13.0" viewBox="0 0 14 14"><path d="M3.1 3.3 A5.4 5.4 0 1 1 1.6 7.4" fill="none" stroke="#fff" stroke-width="1.2" stroke-linecap="round"/><path d="M3.2 0.7 V3.5 H6" fill="none" stroke="#fff" stroke-width="1.2" stroke-linecap="round" stroke-linejoin="round"/></svg>
<div class="mt" id="m12" style="top:469px">Reset columns to default</div>
</div>
<!--MENU_END-->
<!--ARROWS_START-->
<svg id="arrows" width="1366" height="768" viewBox="0 0 1366 768"><g fill="#ff6100">
<path d="M136.4 96 L150.6 137.3 L140.1 131 L140.1 186.5 L133 186.5 L133 131 L122.8 137.2 Z"/>
<path d="M145.7 390.7 L187 377 L179.3 386.8 L248 386.8 L248 394.3 L179.3 394.3 L187 404.2 Z"/>
</g></svg>
<!--ARROWS_END-->
</body>
</html>
